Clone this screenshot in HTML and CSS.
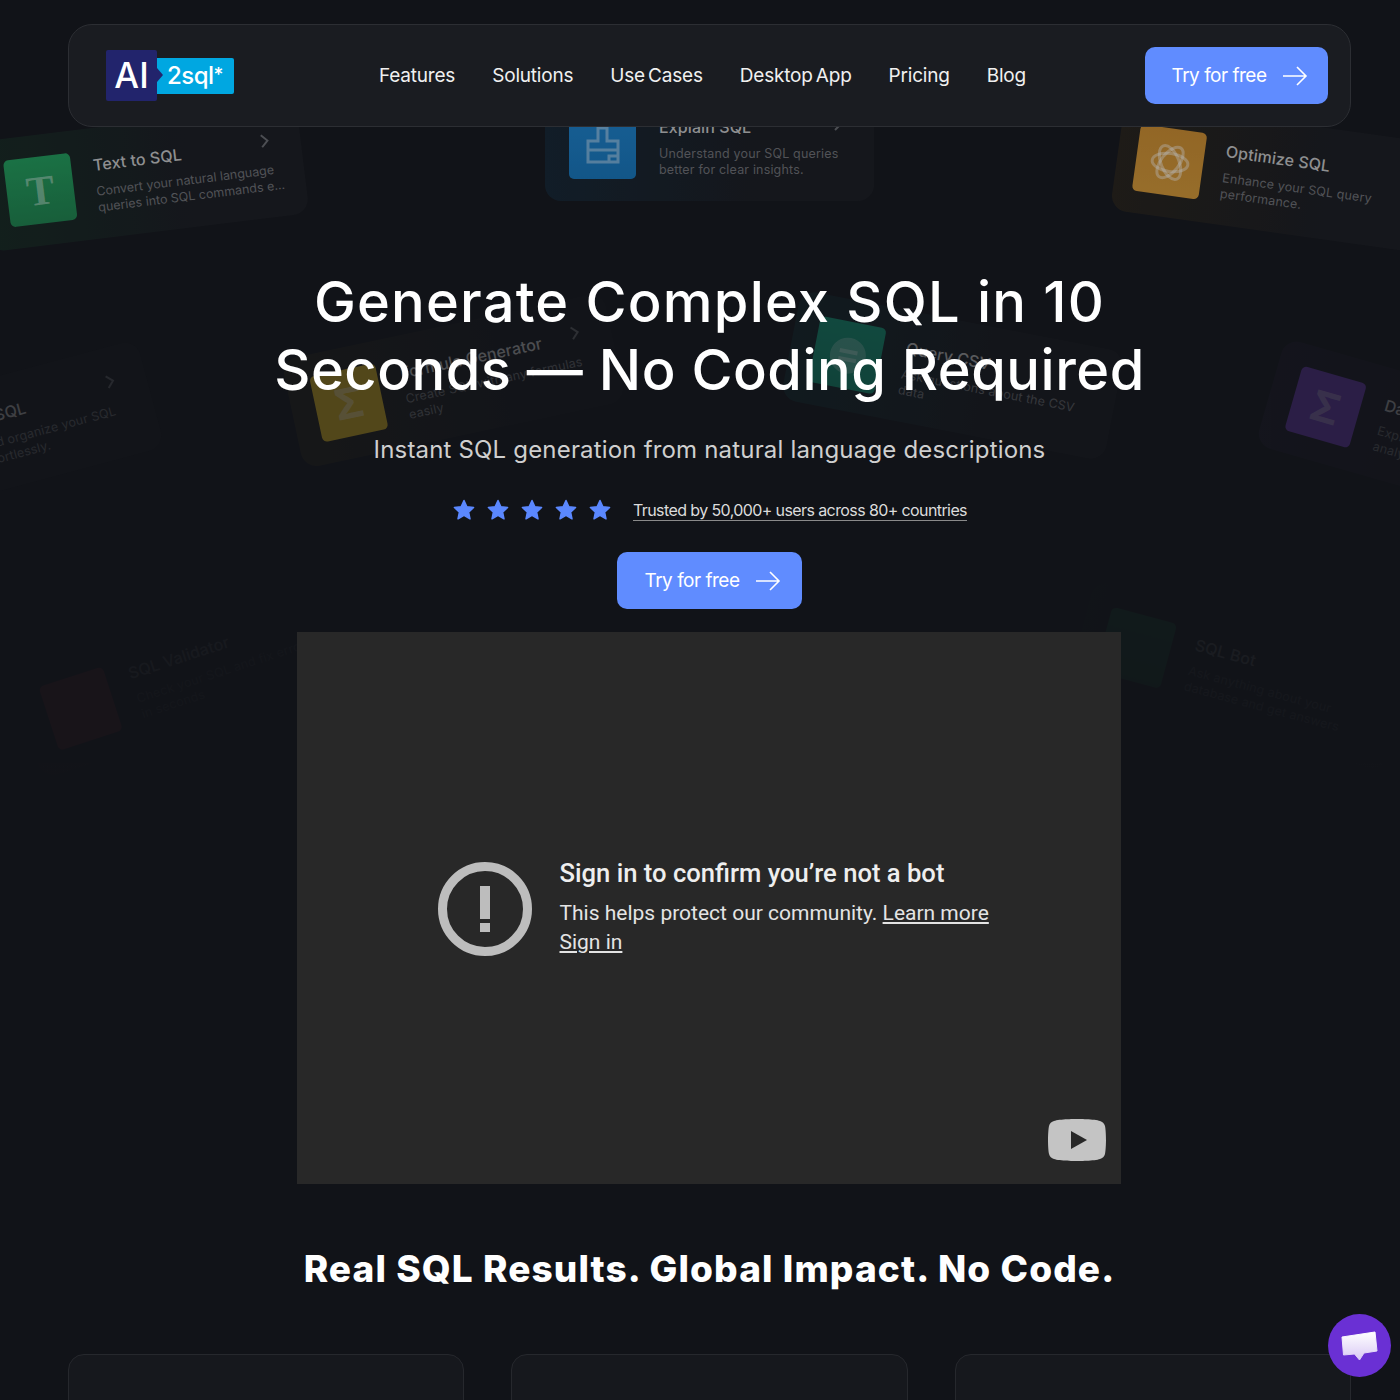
FILE: index.html
```html
<!DOCTYPE html>
<html lang="en">
<head>
    <meta charset="UTF-8">
    <meta name="viewport" content="width=device-width, initial-scale=1.0">
    <title>AI2sql</title>
    <link rel="stylesheet" href="styles.css">
</head>
<body>
<div class="page">
    <!-- faint tool cards floating behind the hero -->
    <div class="floating-cards">
        <div class="tool-card card-text tint-green">
            <div class="tool-icon"><span class="icon-letter serif">T</span></div>
            <div class="tool-body"><h3>Text to SQL</h3><p>Convert your natural language queries into SQL commands e...</p></div>
            <svg class="chevron" viewBox="0 0 12 16"><path d="M3 2l6 6-6 6"/></svg>
        </div>
        <div class="tool-card card-explain tint-blue">
            <div class="tool-icon">
                <svg class="icon-line" viewBox="0 0 36 40"><path d="M13 2h9v13h11v21H3V15h10zM3 24h30M24 36v-6h9"/></svg>
            </div>
            <div class="tool-body"><h3>Explain SQL</h3><p>Understand your SQL queries better for clear insights.</p></div>
            <svg class="chevron" viewBox="0 0 12 16"><path d="M3 2l6 6-6 6"/></svg>
        </div>
        <div class="tool-card card-optimize tint-orange">
            <div class="tool-icon">
                <svg class="icon-line" viewBox="0 0 40 40"><ellipse cx="20" cy="20" rx="18" ry="9"/><ellipse cx="20" cy="20" rx="18" ry="9" transform="rotate(60 20 20)"/><ellipse cx="20" cy="20" rx="18" ry="9" transform="rotate(120 20 20)"/></svg>
            </div>
            <div class="tool-body"><h3>Optimize SQL</h3><p>Enhance your SQL query performance.</p></div>
        </div>
        <div class="tool-card card-format">
            <div class="tool-icon tool-icon-plain"></div>
            <div class="tool-body"><h3>Format SQL</h3><p>Clean and organize your SQL code effortlessly.</p></div>
            <svg class="chevron" viewBox="0 0 12 16"><path d="M3 2l6 6-6 6"/></svg>
        </div>
        <div class="tool-card card-formula tint-yellow">
            <div class="tool-icon"><span class="icon-letter">Σ</span></div>
            <div class="tool-body"><h3>Formula Generator</h3><p>Create SQL with any formulas easily</p></div>
            <svg class="chevron" viewBox="0 0 12 16"><path d="M3 2l6 6-6 6"/></svg>
        </div>
        <div class="tool-card card-csv tint-teal">
            <div class="tool-icon">
                <svg class="icon-solid" viewBox="0 0 40 40"><circle cx="20" cy="20" r="18"/><path d="M11 16h18M11 24h18"/></svg>
            </div>
            <div class="tool-body"><h3>Query CSV</h3><p>Ask questions about the CSV data</p></div>
        </div>
        <div class="tool-card card-data tint-purple">
            <div class="tool-icon"><span class="icon-letter">Σ</span></div>
            <div class="tool-body"><h3>Data Analysis</h3><p>Explore your data with instant analysis</p></div>
        </div>
        <div class="tool-card card-validator tint-red">
            <div class="tool-icon"></div>
            <div class="tool-body"><h3>SQL Validator</h3><p>Check your SQL and fix errors in seconds</p></div>
        </div>
        <div class="tool-card card-bot tint-green">
            <div class="tool-icon"></div>
            <div class="tool-body"><h3>SQL Bot</h3><p>Ask anything about your database and get answers</p></div>
        </div>
    </div>

    <header class="navbar">
        <a class="logo" href="#">
            <span class="logo-ai">AI</span>
            <span class="logo-sql">2sql<span class="logo-star">*</span></span>
        </a>
        <nav class="nav-links">
            <a href="#">Features</a>
            <a href="#">Solutions</a>
            <a href="#">Use Cases</a>
            <a href="#">Desktop App</a>
            <a href="#">Pricing</a>
            <a href="#">Blog</a>
        </nav>
        <a class="btn-try btn-nav" href="#">Try for free
            <svg class="btn-arrow" viewBox="0 0 26 24"><path d="M1 12h23M15 3l9 9-9 9"/></svg>
        </a>
    </header>

    <main class="hero">
        <h1><span class="line-one">Generate Complex SQL in 10</span><span class="line-two">Seconds — No Coding Required</span></h1>
        <p class="subtitle">Instant SQL generation from natural language descriptions</p>
        <div class="trust-row">
            <div class="stars">
                <svg viewBox="0 0 24 24"><path d="M12 2.5l2.9 6.2 6.7.8-5 4.6 1.4 6.7-6-3.4-6 3.4 1.4-6.7-5-4.6 6.7-.8z"/></svg>
                <svg viewBox="0 0 24 24"><path d="M12 2.5l2.9 6.2 6.7.8-5 4.6 1.4 6.7-6-3.4-6 3.4 1.4-6.7-5-4.6 6.7-.8z"/></svg>
                <svg viewBox="0 0 24 24"><path d="M12 2.5l2.9 6.2 6.7.8-5 4.6 1.4 6.7-6-3.4-6 3.4 1.4-6.7-5-4.6 6.7-.8z"/></svg>
                <svg viewBox="0 0 24 24"><path d="M12 2.5l2.9 6.2 6.7.8-5 4.6 1.4 6.7-6-3.4-6 3.4 1.4-6.7-5-4.6 6.7-.8z"/></svg>
                <svg viewBox="0 0 24 24"><path d="M12 2.5l2.9 6.2 6.7.8-5 4.6 1.4 6.7-6-3.4-6 3.4 1.4-6.7-5-4.6 6.7-.8z"/></svg>
            </div>
            <a class="trust-text" href="#">Trusted by 50,000+ users across 80+ countries</a>
        </div>
        <a class="btn-try btn-hero" href="#">Try for free
            <svg class="btn-arrow" viewBox="0 0 26 24"><path d="M1 12h23M15 3l9 9-9 9"/></svg>
        </a>

        <div class="video">
            <div class="video-message">
                <svg class="video-warning" viewBox="0 0 94 94">
                    <circle cx="47" cy="47" r="42.5"/>
                    <rect x="42" y="24" width="10" height="33"/>
                    <rect x="42" y="61" width="10" height="9"/>
                </svg>
                <div class="video-text">
                    <h2>Sign in to confirm you’re not a bot</h2>
                    <p>This helps protect our community. <a href="#">Learn more</a></p>
                    <p><a href="#">Sign in</a></p>
                </div>
            </div>
            <svg class="video-logo" viewBox="0 0 58 42">
                <path class="logo-body" d="M57 7c-.7-2.500-2.700-4.400-5-5C47 0 29 0 29 0S11 0 6 2C3.500 2.700 1.500 4.500 1 7 0 12 0 21 0 21s0 9 1 14c.6 2.500 2.600 4.400 5 5 5 2 23 2 23 2s18 0 23-2c2.400-.6 4.400-2.500 5-5 1-5 1-14 1-14s0-9-1-14z"/>
                <path class="logo-play" d="M23 12l16 9-16 9z"/>
            </svg>
        </div>

        <h2 class="results-title">Real SQL Results. Global Impact. No Code.</h2>
        <div class="results-grid">
            <div class="result-card"></div>
            <div class="result-card"></div>
            <div class="result-card"></div>
        </div>
    </main>

    <button class="chat-button" type="button" aria-label="Chat">
        <svg viewBox="0 0 40 36">
            <defs>
                <linearGradient id="chatFill" x1="0" y1="0" x2="0" y2="1">
                    <stop offset="0" stop-color="#ffffff"/>
                    <stop offset="1" stop-color="#d9c9f5"/>
                </linearGradient>
            </defs>
            <path fill="url(#chatFill)" stroke="url(#chatFill)" stroke-linejoin="round" d="M2 9l33-5 2 19-13 2-4.500 7-5-6-11 1z"/>
        </svg>
    </button>
</div>
</body>
</html>
```

FILE: styles.css
```css
* {
    margin: 0;
    padding: 0;
    box-sizing: border-box;
}

html, body {
    height: 1400px;
    overflow: hidden;
}

body {
    background: #111318;
    color: #fff;
    font-family: Inter, "Liberation Sans", sans-serif;
}

a {
    color: inherit;
    text-decoration: none;
}

.page {
    position: relative;
    height: 1400px;
    padding: 24px 49px 0 68px;
    overflow: hidden;
}

/* navbar */
.navbar {
    position: relative;
    z-index: 3;
    display: flex;
    align-items: center;
    height: 103px;
    padding: 0 22px 0 37px;
    background: #1a1c21;
    border: 1px solid #2c2e33;
    border-radius: 24px;
}

.logo {
    display: flex;
    align-items: center;
    width: 128px;
}

.logo-ai {
    position: relative;
    width: 51px;
    height: 51px;
    background: #22246c;
    border-radius: 2px;
    font-size: 35px;
    font-weight: 500;
    line-height: 51px;
    text-align: center;
}

.logo-ai::after {
    content: "";
    position: absolute;
    left: 100%;
    top: 18px;
    border-left: 6px solid #22246c;
    border-top: 7px solid transparent;
    border-bottom: 7px solid transparent;
}

.logo-sql {
    width: 77px;
    height: 36px;
    padding-left: 10px;
    background: #00a7e1;
    border-radius: 0 2px 2px 0;
    font-size: 24px;
    font-weight: 500;
    line-height: 33px;
    letter-spacing: -0.5px;
}

.logo-star {
    font-size: 19px;
    vertical-align: 3px;
}

.nav-links {
    display: flex;
    gap: 37px;
    margin-left: 145px;
    font-size: 19px;
    letter-spacing: -0.2px;
    word-spacing: -2px;
    color: #f0f0f0;
}

.btn-try {
    display: flex;
    align-items: center;
    justify-content: center;
    gap: 15px;
    width: 183px;
    height: 57px;
    padding-left: 6px;
    background: #608cff;
    border-radius: 10px;
    font-size: 19px;
    letter-spacing: -0.5px;
    color: #fff;
}

.btn-nav {
    margin-left: auto;
}

.btn-arrow {
    width: 26px;
    height: 24px;
    fill: none;
    stroke: #fff;
    stroke-width: 1.6;
}

/* hero */
.hero {
    position: relative;
    z-index: 2;
    display: flex;
    flex-direction: column;
    align-items: center;
    padding-top: 141px;
}

h1 {
    font-size: 56px;
    font-weight: 500;
    line-height: 68px;
    text-align: center;
    white-space: nowrap;
}

.line-one,
.line-two {
    display: block;
}

.line-one {
    letter-spacing: 1.2px;
}

.line-two {
    letter-spacing: 0.5px;
}

.subtitle {
    margin-top: 30px;
    font-size: 24px;
    line-height: 32px;
    letter-spacing: 0.18px;
    color: #cfcfcf;
}

.trust-row {
    display: flex;
    align-items: center;
    gap: 21px;
    margin-top: 32px;
    height: 24px;
}

.stars {
    display: flex;
    gap: 10px;
}

.stars svg {
    width: 24px;
    height: 24px;
    fill: #5b88ff;
    stroke: #5b88ff;
    stroke-linejoin: round;
    stroke-width: 1.5;
}

.trust-text {
    font-size: 16px;
    line-height: 20px;
    letter-spacing: -0.6px;
    color: #dcdcdc;
    border-bottom: 1px solid #8a8a8a;
}

.btn-hero {
    margin-top: 30px;
    width: 185px;
}

/* video embed */
.video {
    position: relative;
    display: flex;
    align-items: center;
    width: 824px;
    height: 552px;
    margin: 23px 2px 0 0;
    padding-left: 141px;
    background: #282828;
    font-family: Roboto, "Liberation Sans", sans-serif;
}

.video-message {
    display: flex;
    align-items: center;
    gap: 28px;
}

.video-warning {
    flex: none;
    width: 94px;
    height: 94px;
    margin-top: 1px;
    fill: #bdbdbd;
}

.video-warning circle {
    fill: none;
    stroke: #bdbdbd;
    stroke-width: 9;
}

.video-text {
    margin-top: -2px;
}

.video-text h2 {
    font-size: 25.6px;
    font-weight: 500;
    line-height: 30px;
    margin-bottom: 11px;
    color: #eee;
}

.video-text p {
    font-size: 21px;
    line-height: 29px;
    color: #e4e4e4;
}

.video-text a {
    text-decoration: underline;
}

.video-logo {
    position: absolute;
    right: 15px;
    bottom: 23px;
    width: 58px;
    height: 42px;
}

.logo-body {
    fill: #c4c4c4;
}

.logo-play {
    fill: #282828;
}

/* results */
.results-title {
    margin-top: 61px;
    font-size: 37px;
    font-weight: 800;
    line-height: 48px;
    letter-spacing: 1.1px;
    white-space: nowrap;
}

.results-grid {
    display: grid;
    grid-template-columns: repeat(3, 1fr);
    gap: 47px;
    width: 100%;
    margin-top: 61px;
}

.result-card {
    height: 200px;
    background: #16181d;
    border: 1px solid #26282d;
    border-radius: 16px;
}

/* floating tool cards */
.floating-cards {
    position: absolute;
    inset: 0;
    z-index: 1;
}

.tool-card {
    position: absolute;
    display: flex;
    align-items: center;
    gap: 23px;
    width: 329px;
    height: 111px;
    padding: 0 24px;
    background: #17191e;
    border-radius: 16px;
}

.tint-green { background: linear-gradient(90deg, #13261f, #17191e 65%); }
.tint-blue { background: linear-gradient(90deg, #12222f, #17191e 65%); }
.tint-orange { background: linear-gradient(90deg, #241f17, #17191e 65%); }
.tint-yellow { background: linear-gradient(90deg, #23211a, #17191e 65%); }
.tint-teal { background: linear-gradient(90deg, #12262a, #17191e 65%); }
.tint-purple { background: linear-gradient(90deg, #1d1a2a, #17191e 65%); }
.tint-red { background: linear-gradient(90deg, #261419, #17191e 65%); }

.tool-icon {
    flex: none;
    display: flex;
    align-items: center;
    justify-content: center;
    width: 67px;
    height: 67px;
    border-radius: 5px;
    background: #333;
}

.tint-green .tool-icon { background: linear-gradient(180deg, #1f9a58, #1b7f4a); }
.tint-blue .tool-icon { background: linear-gradient(180deg, #1b7fc9, #1373b8); }
.tint-orange .tool-icon { background: linear-gradient(180deg, #c98a2c, #d09433); }
.tint-yellow .tool-icon { background: #d6b021; }
.tint-teal .tool-icon { background: linear-gradient(180deg, #139a78, #0f8a6c); }
.tint-purple .tool-icon { background: #7a3fd0; }
.tint-red .tool-icon { background: #d6304a; }

.tool-icon-plain {
    background: #2a2c33;
}

.icon-letter {
    font-size: 42px;
    font-weight: 700;
    color: rgba(255, 255, 255, 0.4);
}

.serif {
    font-family: "Liberation Serif", serif;
}

.icon-line {
    width: 40px;
    height: 40px;
    fill: none;
    stroke: rgba(255, 255, 255, 0.4);
    stroke-width: 3;
}

.icon-solid {
    width: 40px;
    height: 40px;
    fill: rgba(255, 255, 255, 0.25);
    stroke: none;
}

.icon-solid path {
    fill: none;
    stroke: rgba(255, 255, 255, 0.3);
    stroke-width: 4;
}

.tool-body {
    flex: 1;
    padding-top: 4px;
}

.tool-body h3 {
    font-size: 16px;
    font-weight: 500;
    line-height: 20px;
    letter-spacing: 0.1px;
    margin-bottom: 9px;
    color: #c4c4c4;
}

.tool-body p {
    font-size: 12.5px;
    line-height: 16px;
    letter-spacing: 0.17px;
    color: #6d6e72;
}

.chevron {
    position: absolute;
    top: 26px;
    right: 30px;
    width: 12px;
    height: 16px;
    fill: none;
    stroke: #66686c;
    stroke-width: 2;
}

.card-text { left: -18px; top: 122px; width: 322px; padding-right: 10px; gap: 22px; transform: rotate(-7deg); opacity: 0.7; }
.card-text p { letter-spacing: 0; }
.card-explain { left: 545px; top: 90px; opacity: 0.7; }
.card-optimize { left: 1116px; top: 122px; padding-left: 19px; gap: 21px; transform: rotate(8deg); opacity: 0.7; }
.card-format { left: -173px; top: 380px; transform: rotate(-15deg); opacity: 0.25; }
.card-formula { left: 289px; top: 325px; transform: rotate(-12deg); opacity: 0.33; }
.card-csv { left: 788px; top: 320px; transform: rotate(11deg); opacity: 0.4; }
.card-data { left: 1264px; top: 381px; transform: rotate(16deg); opacity: 0.25; }
.card-validator { left: 18px; top: 620px; transform: rotate(-18deg); opacity: 0.035; }
.card-bot { left: 1075px; top: 620px; transform: rotate(15deg); opacity: 0.05; }

/* chat widget */
.chat-button {
    position: fixed;
    left: 1328px;
    top: 1314px;
    z-index: 5;
    display: flex;
    align-items: center;
    justify-content: center;
    width: 63px;
    height: 63px;
    background: #6a30d4;
    border: none;
    border-radius: 50%;
    cursor: pointer;
}

.chat-button svg {
    flex: none;
    width: 40px;
    height: 36px;
}
```
